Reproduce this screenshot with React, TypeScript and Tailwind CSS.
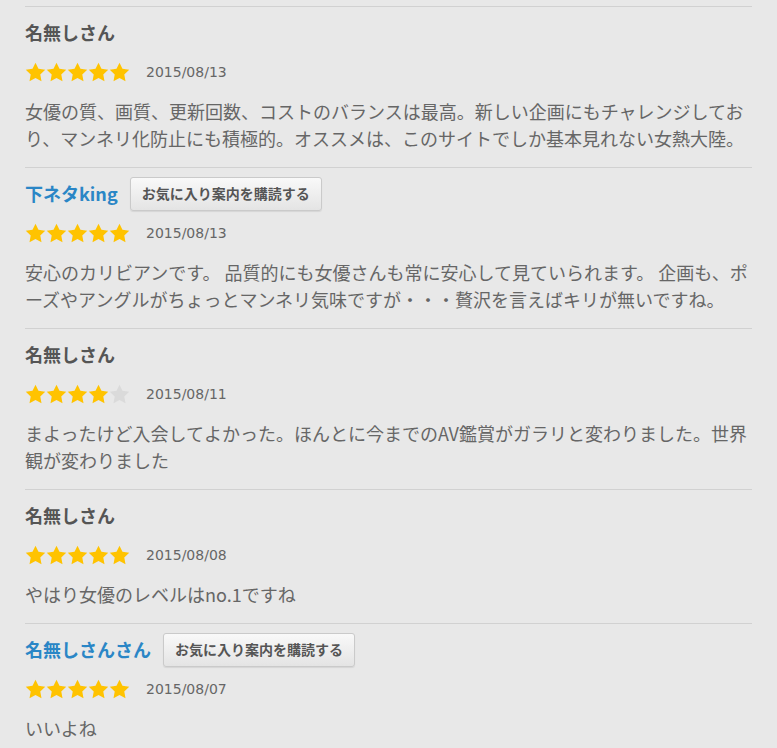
import { Fragment } from 'react'

type Review = {
  name: string
  member: boolean
  rating: number
  date: string
  lines: string[]
}

const reviews: Review[] = [
  {
    name: '名無しさん',
    member: false,
    rating: 5,
    date: '2015/08/13',
    lines: [
      '女優の質、画質、更新回数、コストのバランスは最高。新しい企画にもチャレンジしてお',
      'り、マンネリ化防止にも積極的。オススメは、このサイトでしか基本見れない女熱大陸。',
    ],
  },
  {
    name: '下ネタking',
    member: true,
    rating: 5,
    date: '2015/08/13',
    lines: [
      '安心のカリビアンです。 品質的にも女優さんも常に安心して見ていられます。 企画も、ポ',
      'ーズやアングルがちょっとマンネリ気味ですが・・・贅沢を言えばキリが無いですね。',
    ],
  },
  {
    name: '名無しさん',
    member: false,
    rating: 4,
    date: '2015/08/11',
    lines: [
      'まよったけど入会してよかった。ほんとに今までのAV鑑賞がガラリと変わりました。世界',
      '観が変わりました',
    ],
  },
  {
    name: '名無しさん',
    member: false,
    rating: 5,
    date: '2015/08/08',
    lines: ['やはり女優のレベルはno.1ですね'],
  },
  {
    name: '名無しさんさん',
    member: true,
    rating: 5,
    date: '2015/08/07',
    lines: ['いいよね'],
  },
]

const jp = '"Noto Sans CJK JP", "Noto Sans", sans-serif'

function Star({ on }: { on: boolean }) {
  return (
    <svg width="21" height="20" viewBox="0 0 24 23" className="block">
      <path
        d="M12 0.8l3.4 7.1 7.8 1-5.7 5.4 1.4 7.7L12 18.3 5.1 22l1.4-7.7L0.8 8.9l7.8-1z"
        fill={on ? '#ffc300' : '#dadada'}
      />
    </svg>
  )
}

export default function App() {
  return (
    <div className="min-h-[748px] bg-[#e8e8e8] px-[25px] pt-[6px]" style={{ fontFamily: jp }}>
      {reviews.map((r, i) => (
        <div key={i} className="border-t border-[#d1d1d1] pt-[9px] pb-[15px]">
          <div className="flex items-center h-[34px]">
            <span
              className={`pb-[3px] text-[18px] font-bold leading-none ${r.member ? 'text-[#2a86c6]' : 'text-[#555]'}`}
            >
              {r.name}
            </span>
            {r.member && (
              <button className="ml-3 h-[34px] px-[11px] pb-[2px] rounded-[3px] border border-[#cacaca] bg-gradient-to-b from-[#f9f9f9] to-[#e4e4e4] shadow-[0_1px_1px_rgba(0,0,0,0.08)] text-[14px] font-bold text-[#555]">
                お気に入り案内を購読する
              </button>
            )}
          </div>
          <div className="flex items-center mt-[12px] h-[20px]">
            <div className="flex">
              {[0, 1, 2, 3, 4].map((s) => (
                <Star key={s} on={s < r.rating} />
              ))}
            </div>
            <span
              className="ml-[16px] text-[14px] text-[#666]"
              style={{ fontFamily: '"DejaVu Sans", sans-serif' }}
            >
              {r.date}
            </span>
          </div>
          <p className="mt-[16px] text-[18px] leading-[27px] text-[#666]">
            {r.lines.map((l, j) => (
              <Fragment key={j}>
                <span className="block whitespace-nowrap">{l}</span>
              </Fragment>
            ))}
          </p>
        </div>
      ))}
    </div>
  )
}
